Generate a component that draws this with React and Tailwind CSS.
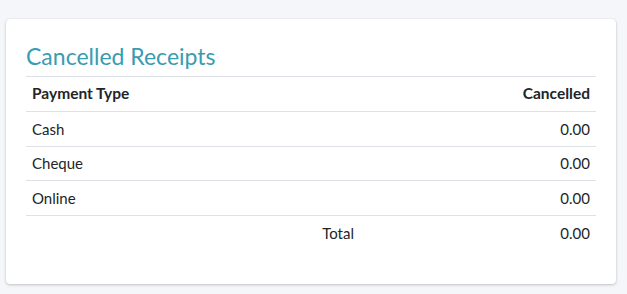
const rows = [
  { type: "Cash", amount: "0.00" },
  { type: "Cheque", amount: "0.00" },
  { type: "Online", amount: "0.00" },
];

export default function App() {
  return (
    <div className="min-h-[294px] bg-[#f4f6f9] pt-[19px] pl-[6px] pr-[11px] text-[#212529] font-['Lato','Noto_Sans',sans-serif]">
      <div className="bg-white rounded-[4px] shadow-[0_0_1px_rgba(0,0,0,0.15),0_1px_3px_rgba(0,0,0,0.2)] px-5 pt-[18px] pb-[34px]">
        <h3 className="text-[23px] leading-[38px] text-[#3a9bb1] mb-[1px]">Cancelled Receipts</h3>
        <table className="w-full text-[15px] border-t border-[#dee2e6]">
          <thead>
            <tr className="border-b border-[#dee2e6]">
              <th className="text-left text-[15.5px] font-bold px-[6px] h-[35px]">Payment Type</th>
              <th className="text-right text-[15.5px] font-bold px-[6px] h-[35px]">Cancelled</th>
            </tr>
          </thead>
          <tbody>
            {rows.map((r) => (
              <tr key={r.type} className="border-b border-[#dee2e6]">
                <td className="text-left px-[6px] h-[34.6px]">{r.type}</td>
                <td className="text-right px-[6px] h-[34.6px]">{r.amount}</td>
              </tr>
            ))}
            <tr>
              <td className="w-[334px] text-right px-[6px] h-[34.6px]">Total</td>
              <td className="text-right px-[6px] h-[34.6px]">0.00</td>
            </tr>
          </tbody>
        </table>
      </div>
    </div>
  );
}
